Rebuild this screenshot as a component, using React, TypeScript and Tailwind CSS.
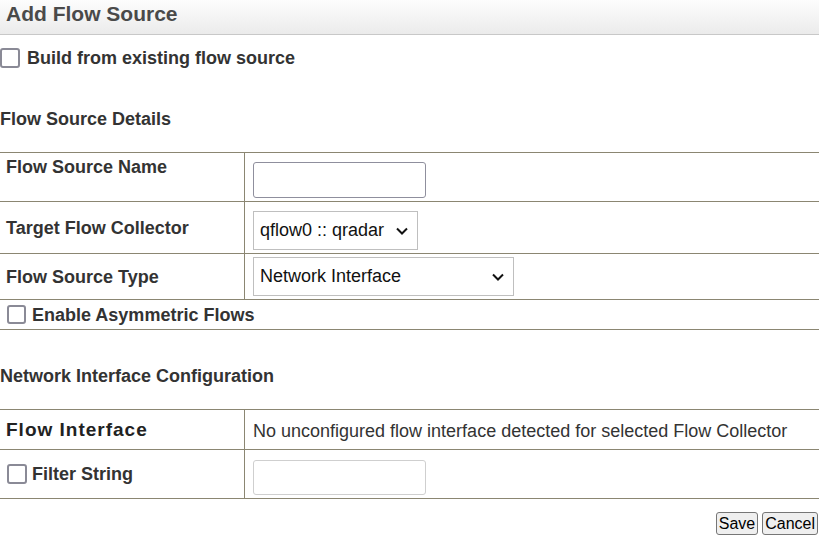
import React from "react";

const line = "border-[#8b8672]";

function Box({ size = "w-[20px] h-[20px]" }: { size?: string }) {
  return (
    <span
      className={`${size} shrink-0 rounded-[3px] border-2 border-[#8a8a96] bg-white`}
    />
  );
}

function Chevron() {
  return (
    <svg width="14" height="10" viewBox="0 0 14 10" className="shrink-0">
      <path
        d="M2 2.5 L7 7.5 L12 2.5"
        fill="none"
        stroke="#111"
        strokeWidth="2"
      />
    </svg>
  );
}

function Select({ value, width }: { value: string; width: string }) {
  return (
    <div
      className={`${width} h-[39px] flex items-center justify-between pl-[6px] pr-[8px] border border-[#bfbfbf] bg-white text-[18px] text-[#111]`}
    >
      <span>{value}</span>
      <Chevron />
    </div>
  );
}

export default function App() {
  return (
    <div
      className="w-[819px] h-[537px] bg-white text-[#333] overflow-hidden"
      style={{ fontFamily: '"Liberation Sans", Arial, sans-serif' }}
    >
      <div className="h-[35px] border-b border-[#c8c8c8] bg-gradient-to-b from-[#fdfdfd] to-[#ebebeb]">
        <h1 className="pl-[6px] text-[21px] leading-[28px] font-bold text-[#4a4a4a]">
          Add Flow Source
        </h1>
      </div>

      <div className="mt-[13px] flex items-center gap-[7px] h-[20px]">
        <Box />
        <span className="text-[18px] leading-[20px] font-bold">
          Build from existing flow source
        </span>
      </div>

      <h2 className="mt-[41px] text-[18px] leading-[20px] font-bold">
        Flow Source Details
      </h2>

      <div className={`mt-[23px] border-t ${line}`}>
        <div className={`grid grid-cols-[245px_1fr] border-b ${line} h-[49px]`}>
          <div className={`border-r ${line} pl-[6px] pt-[4px] text-[18px] leading-[20px] font-bold`}>
            Flow Source Name
          </div>
          <div className="pl-[8px] pt-[9px]">
            <div className="w-[173px] h-[36px] rounded-[3px] border border-[#8f8f9d] bg-white" />
          </div>
        </div>

        <div className={`grid grid-cols-[245px_1fr] border-b ${line} h-[52px]`}>
          <div className={`border-r ${line} pl-[6px] flex items-center text-[18px] leading-[20px] font-bold`}>
            Target Flow Collector
          </div>
          <div className="pl-[8px] pt-[9px]">
            <Select value="qflow0 :: qradar" width="w-[165px]" />
          </div>
        </div>

        <div className={`grid grid-cols-[245px_1fr] border-b ${line} h-[46px]`}>
          <div className={`border-r ${line} pl-[6px] flex items-center text-[18px] leading-[20px] font-bold`}>
            Flow Source Type
          </div>
          <div className="pl-[8px] pt-[3px]">
            <Select value="Network Interface" width="w-[261px]" />
          </div>
        </div>

        <div className={`flex items-center gap-[6px] pl-[7px] border-b ${line} h-[30px]`}>
          <Box size="w-[19px] h-[19px]" />
          <span className="text-[18px] leading-[20px] font-bold">
            Enable Asymmetric Flows
          </span>
        </div>
      </div>

      <h2 className="mt-[36px] text-[18px] leading-[20px] font-bold">
        Network Interface Configuration
      </h2>

      <div className={`mt-[23px] border-t ${line}`}>
        <div className={`grid grid-cols-[245px_1fr] border-b ${line} h-[40px]`}>
          <div className={`border-r ${line} pl-[6px] flex items-center text-[19px] leading-[20px] font-bold tracking-[1px] text-[#222]`}>
            Flow Interface
          </div>
          <div className="pl-[8px] flex items-center pt-[3px] text-[18px] leading-[20px]">
            No unconfigured flow interface detected for selected Flow Collector
          </div>
        </div>

        <div className={`grid grid-cols-[245px_1fr] border-b ${line} h-[49px]`}>
          <div className={`border-r ${line} pl-[7px] flex items-center gap-[5px]`}>
            <Box size="w-[20px] h-[20px]" />
            <span className="text-[18px] leading-[20px] font-bold">Filter String</span>
          </div>
          <div className="pl-[8px] pt-[10px]">
            <div className="w-[173px] h-[35px] rounded-[3px] border border-[#cfcfcf] bg-white" />
          </div>
        </div>
      </div>

      <div className="mt-[13px] flex justify-end gap-[4px] pr-[1px]">
        <button className="h-[23px] px-[2px] rounded-[3px] border border-[#767676] bg-[#efefef] text-[16px] leading-[20px] text-black">
          Save
        </button>
        <button className="h-[23px] px-[2px] rounded-[3px] border border-[#767676] bg-[#efefef] text-[16px] leading-[20px] text-black">
          Cancel
        </button>
      </div>
    </div>
  );
}
